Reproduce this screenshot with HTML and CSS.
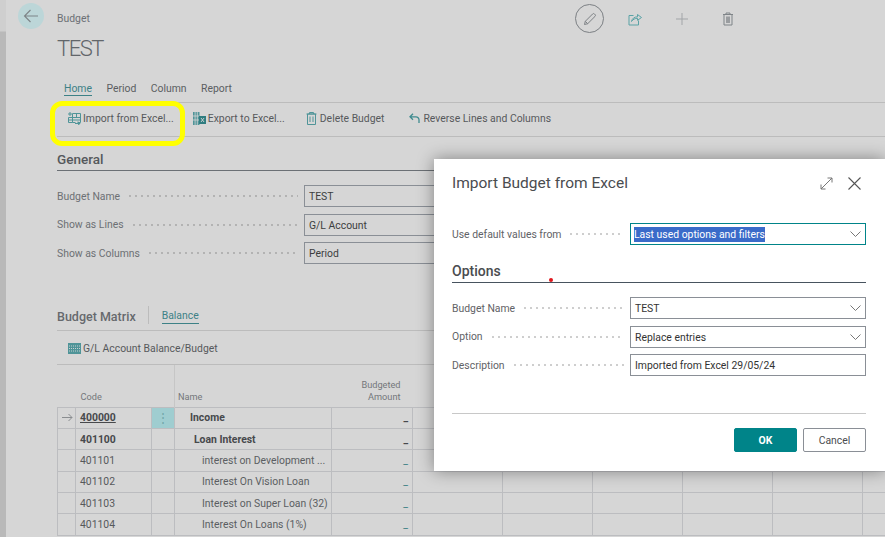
FILE: index.html
```html
<!DOCTYPE html>
<html lang="en">
<head>
  <meta charset="UTF-8" />
  <title>Budget - TEST</title>
  <link rel="stylesheet" href="styles.css">
</head>
<body>
  <div class="strip"></div>
  <div class="page">
    <header class="top">
      <button class="back">
        <svg width="16" height="14" viewBox="0 0 16 14"><path d="M15 7H1.500M7.500 1L1.500 7l6 6" fill="none" stroke="#7d8487" stroke-width="1.100"/></svg>
      </button>
      <div class="crumb">Budget</div>
      <div class="top-icons">
        <span class="edit">
          <svg width="14" height="14" viewBox="0 0 14 14"><path d="M1.500 12.500l.8-3.200L9.600 2a1.300 1.300 0 0 1 1.900 0l.5.500a1.300 1.300 0 0 1 0 1.900L4.700 11.700zM2.300 9.300l2.400 2.400" fill="none" stroke="#7c8084" stroke-width="1"/></svg>
        </span>
        <svg class="ico-share" width="14" height="14" viewBox="0 0 14 14"><path d="M5.500 3.500H1v9.500h9.500V8.500M3.500 9.500C4 6.500 6.500 4.800 9.500 4.800V2.500L13.500 5.500L9.500 8.300V6.300C7 6.300 5 7.300 3.500 9.500Z" fill="none" stroke="#5aa3a6" stroke-width="1"/></svg>
        <svg class="ico-plus" width="14" height="14" viewBox="0 0 14 14"><path d="M7 1v12M1 7h12" stroke="#a2a5a8" stroke-width="1"/></svg>
        <svg class="ico-trash" width="12" height="14" viewBox="0 0 12 14"><path d="M1 2.500h10M4 2.500V1h4v1.500M2 2.500h8V13H2z" fill="none" stroke="#7f8488" stroke-width="1"/><path d="M4 4.500h4V11H4z" fill="#9a9da0"/></svg>
      </div>
    </header>
    <h1 class="title">TEST</h1>

    <nav class="tabs">
      <a class="tab active">Home</a>
      <a class="tab">Period</a>
      <a class="tab">Column</a>
      <a class="tab">Report</a>
    </nav>

    <div class="toolbar">
      <span class="action action-import">
        <svg width="13" height="13" viewBox="0 0 13 13"><path d="M4.500 1.500h8v9h-3M.5 5.500h12M4.500 1.500v9h3M8.500 1.500v4M.5 5.500v5h4M.5 8h12" fill="none" stroke="#4f9498" stroke-width="1"/><path d="M0 2h4M2 0v4M7 11.500h5M10 9.500l2 2-2 1.500" fill="none" stroke="#4f9498" stroke-width="1"/></svg>
        Import from Excel...
      </span>
      <span class="action action-export">
        <svg width="13" height="13" viewBox="0 0 13 13"><path d="M0 0h6.500v13H0z" fill="#4f9498"/><path d="M2.100 0v13M4.300 0v13M0 4h6M0 8h6" stroke="#d6d6d6" stroke-width=".8"/><path d="M6 4h7v8H6z" fill="#2f7d80"/><path d="M8 6l3 4M11 6l-3 4" stroke="#d6d6d6" stroke-width=".9"/></svg>
        Export to Excel...
      </span>
      <span class="action action-delete">
        <svg width="11" height="13" viewBox="0 0 11 13"><path d="M.5 2h10M3.500 2V.5h4V2M1.500 2h8v10.500h-8zM4 4.500V10M7 4.500V10" fill="none" stroke="#4f9498" stroke-width="1"/></svg>
        Delete Budget
      </span>
      <span class="action action-reverse">
        <svg width="11" height="11" viewBox="0 0 11 11"><path d="M4 .8L1 3.800l3 3M1 3.800h6a3 3 0 0 1 3 3V10" fill="none" stroke="#3f8b8f" stroke-width="1.300"/></svg>
        Reverse Lines and Columns
      </span>
    </div>

    <h2 class="section-title">General</h2>
    <div class="form">
      <div class="row"><span class="lbl">Budget Name</span><span class="dots"></span><div class="box">TEST</div></div>
      <div class="row"><span class="lbl">Show as Lines</span><span class="dots"></span><div class="box">G/L Account</div></div>
      <div class="row"><span class="lbl">Show as Columns</span><span class="dots"></span><div class="box">Period</div></div>
    </div>

    <div class="matrix-head">
      <span class="matrix-title">Budget Matrix</span>
      <a class="matrix-tab">Balance</a>
    </div>
    <div class="matrix-bar">
      <svg width="13" height="11" viewBox="0 0 13 11"><path d="M0 0h13v11H0z" fill="#4f9498"/><path d="M1 3h11M1 5.500h11M1 8h11" stroke="#d6d6d6" stroke-width=".9" stroke-dasharray="1 1"/></svg>
      G/L Account Balance/Budget
    </div>

    <table class="grid">
      <colgroup>
        <col class="c-arrow"><col class="c-code"><col class="c-menu"><col class="c-name"><col class="c-amount">
        <col class="c-per"><col class="c-per"><col class="c-per"><col class="c-per"><col class="c-per"><col class="c-last">
      </colgroup>
      <thead>
        <tr>
          <th></th>
          <th class="th-code">Code</th>
          <th></th>
          <th class="th-name">Name</th>
          <th class="th-amount">Budgeted<br>Amount</th>
          <th colspan="6"></th>
        </tr>
      </thead>
      <tbody>
        <tr class="strong">
          <td class="arrow"><svg width="11" height="9" viewBox="0 0 11 9"><path d="M0 4.500h10M6.500 1L10 4.500 6.500 8" fill="none" stroke="#8a8d90" stroke-width="1"/></svg></td>
          <td class="code"><u>400000</u></td>
          <td class="menu">&#8942;</td>
          <td class="name lvl0">Income</td>
          <td class="amt">_</td><td></td><td></td><td></td><td></td><td></td><td></td>
        </tr>
        <tr class="strong">
          <td></td><td class="code">401100</td><td></td>
          <td class="name lvl1">Loan Interest</td>
          <td class="amt">_</td><td></td><td></td><td></td><td></td><td></td><td></td>
        </tr>
        <tr>
          <td></td><td class="code">401101</td><td></td>
          <td class="name lvl2">interest on Development ...</td>
          <td class="amt link">_</td><td></td><td></td><td></td><td></td><td></td><td></td>
        </tr>
        <tr>
          <td></td><td class="code">401102</td><td></td>
          <td class="name lvl2">Interest On Vision Loan</td>
          <td class="amt link">_</td><td></td><td></td><td></td><td></td><td></td><td></td>
        </tr>
        <tr>
          <td></td><td class="code">401103</td><td></td>
          <td class="name lvl2">Interest on Super Loan (32)</td>
          <td class="amt link">_</td><td></td><td></td><td></td><td></td><td></td><td></td>
        </tr>
        <tr>
          <td></td><td class="code">401104</td><td></td>
          <td class="name lvl2">Interest On Loans (1%)</td>
          <td class="amt link">_</td><td></td><td></td><td></td><td></td><td></td><td></td>
        </tr>
      </tbody>
    </table>
  </div>

  <div class="highlight"></div>

  <div class="dialog">
    <div class="dlg-head">
      <span class="dlg-title">Import Budget from Excel</span>
      <svg class="dlg-expand" width="13" height="13" viewBox="0 0 13 13"><path d="M1 12L12 1M7.500 1H12v4.500M1 7.500V12h4.500" fill="none" stroke="#777" stroke-width="1"/></svg>
      <svg class="dlg-close" width="13" height="13" viewBox="0 0 13 13"><path d="M.5.500l12 12M12.500.500l-12 12" stroke="#555" stroke-width="1.100"/></svg>
    </div>
    <div class="dlg-row first">
      <span class="lbl">Use default values from</span><span class="dots"></span>
      <div class="box focus"><span class="sel">Last used options and filters</span>
        <svg class="chev" width="11" height="6" viewBox="0 0 11 6"><path d="M.5.500l5 5 5-5" fill="none" stroke="#777" stroke-width="1"/></svg></div>
    </div>
    <h2 class="dlg-section">Options</h2>
    <div class="dlg-row">
      <span class="lbl">Budget Name</span><span class="dots"></span>
      <div class="box">TEST
        <svg class="chev" width="11" height="6" viewBox="0 0 11 6"><path d="M.5.500l5 5 5-5" fill="none" stroke="#777" stroke-width="1"/></svg></div>
    </div>
    <div class="dlg-row">
      <span class="lbl">Option</span><span class="dots"></span>
      <div class="box">Replace entries
        <svg class="chev" width="11" height="6" viewBox="0 0 11 6"><path d="M.5.500l5 5 5-5" fill="none" stroke="#777" stroke-width="1"/></svg></div>
    </div>
    <div class="dlg-row">
      <span class="lbl">Description</span><span class="dots"></span>
      <div class="box">Imported from Excel 29/05/24</div>
    </div>
    <div class="dlg-foot">
      <button class="btn ok">OK</button>
      <button class="btn cancel">Cancel</button>
    </div>
    <span class="red-dot"></span>
  </div>
</body>
</html>
```

FILE: styles.css
```css
* {
  box-sizing: border-box;
}
html, body {
  margin: 0;
  height: 100%;
}
body {
  width: 885px;
  height: 537px;
  overflow: hidden;
  position: relative;
  display: flex;
  background: #d6d6d6;
  font-family: Roboto, "Noto Sans", sans-serif;
  font-size: 10.400px;
  color: #56595c;
}
.strip {
  width: 6px;
  flex: none;
  background: linear-gradient(#cfcfcf 0, #cfcfcf 31px, #b9b9b9 32px);
}
.page {
  flex: 1;
  min-width: 0;
  padding-left: 51px;
}

/* header */
.top {
  height: 36px;
  display: flex;
  align-items: center;
  position: relative;
}
.back {
  position: absolute;
  left: -39px;
  top: 3px;
  width: 26px;
  height: 26px;
  padding: 0;
  border: none;
  border-radius: 50%;
  background: #bcd6d8;
  display: flex;
  align-items: center;
  justify-content: center;
}
.crumb {
  color: #6c7075;
}
.top-icons {
  position: absolute;
  left: 518px;
  top: 4px;
  display: flex;
  align-items: center;
}
.edit {
  width: 29px;
  height: 29px;
  border: 1px solid #7c8084;
  border-radius: 50%;
  display: flex;
  align-items: center;
  justify-content: center;
}
.ico-share { margin-left: 24px; }
.ico-plus { margin-left: 33px; }
.ico-trash { margin-left: 33px; }
.title {
  margin: 0;
  height: 40px;
  font-size: 22px;
  font-weight: 300;
  line-height: 26px;
  letter-spacing: -1.500px;
  color: #62666a;
}

/* tabs and toolbar */
.tabs {
  height: 26px;
  padding: 4px 0 0 7px;
  display: flex;
  gap: 14.500px;
  align-items: flex-start;
}
.tab {
  line-height: 18px;
  color: #5b5e62;
}
.tab.active {
  color: #3d8186;
  border-bottom: 1px solid #3d8186;
  height: 16px;
}
.toolbar {
  height: 35px;
  border-top: 1px solid #bcbcbc;
  border-bottom: 1px solid #bcbcbc;
  display: flex;
  align-items: center;
  padding: 0 0 2px 11px;
}
.action {
  display: flex;
  align-items: center;
  gap: 2px;
  white-space: nowrap;
}
.action-export { margin-left: 19px; }
.action-delete { margin-left: 21px; gap: 3px; }
.action-reverse { margin-left: 25px; gap: 3px; }

/* general section */
.section-title {
  margin: 14px 0 0;
  height: 20px;
  border-bottom: 1px solid #6b7075;
  font-size: 13.500px;
  font-weight: 500;
  line-height: 17px;
  color: #55585c;
}
.form {
  margin-top: 14px;
  display: flex;
  flex-direction: column;
  gap: 6.500px;
}
.row {
  display: flex;
  align-items: center;
  height: 22px;
  width: 527px;
}
.lbl {
  color: #6d7074;
  white-space: nowrap;
}
.dots {
  flex: 1;
  height: 2px;
  margin: 0 6px 0 7px;
  background: radial-gradient(circle, #b2b2b2 0.7px, transparent 1px) 0 0 / 6px 2px repeat-x;
}
.dialog .dots {
  background: radial-gradient(circle, #cdcdcd 0.7px, transparent 1px) 0 0 / 6px 2px repeat-x;
}
.row .box {
  width: 280px;
  flex: none;
}
.box {
  height: 22px;
  border: 1px solid #8a8f96;
  padding: 0 4px;
  line-height: 21px;
  color: #3c3e40;
  position: relative;
}

/* matrix */
.matrix-head {
  margin-top: 42px;
  height: 25px;
  display: flex;
  align-items: flex-start;
  border-bottom: 1px solid #bcbcbc;
}
.matrix-title {
  font-size: 12.500px;
  font-weight: 500;
  line-height: 21px;
  height: 18px;
  padding-right: 12px;
  border-right: 1px solid #bcbcbc;
  color: #66696d;
}
.matrix-tab {
  margin-left: 13px;
  height: 18px;
  line-height: 20px;
  color: #3d8186;
  border-bottom: 1px solid #3d8186;
}
.matrix-bar {
  height: 34px;
  padding: 1px 0 0 11px;
  display: flex;
  align-items: center;
  gap: 2px;
  border-bottom: 1px solid #bcbcbc;
}
.grid {
  table-layout: fixed;
  border-collapse: collapse;
  width: 828px;
}
.c-arrow { width: 18px; }
.c-code { width: 76px; }
.c-menu { width: 23px; }
.c-name { width: 157px; }
.c-amount { width: 81px; }
.c-per { width: 90px; }
.c-last { width: 23px; }
.grid th {
  height: 42px;
  padding: 0 12px 4px 4px;
  font-size: 9.200px;
  font-weight: 400;
  line-height: 12px;
  color: #74777b;
  vertical-align: bottom;
  text-align: left;
}
.th-code { padding-left: 5px !important; }
.th-name {
  border-left: 1px solid #c6c6c6;
  padding-left: 3px !important;
}
.th-amount {
  text-align: right !important;
}
.grid td {
  height: 21.400px;
  padding: 0 4px;
  border: 1px solid #bcbdc0;
  white-space: nowrap;
  overflow: hidden;
}
.strong td {
  font-weight: 700;
  color: #47494c;
}
.arrow {
  padding: 0 0 0 4px !important;
}
.arrow svg {
  display: block;
}
.strong .menu {
  background: #9fcdd0;
  color: #6fa6a9;
  font-weight: 400;
  text-align: center;
  font-size: 12px;
  padding: 0;
}
.name { color: #5b5e62; }
.strong .name { color: #47494c; }
.lvl0 { padding-left: 15px !important; }
.lvl1 { padding-left: 19px !important; }
.lvl2 { padding-left: 27px !important; }
.amt {
  text-align: right;
  color: #47494c;
}
.amt.link { color: #3d8186; }

/* yellow marker drawn over the screenshot */
.highlight {
  position: absolute;
  left: 50px;
  top: 101px;
  width: 135px;
  height: 45px;
  border: 5px solid #ffff00;
  border-radius: 12px;
}

/* dialog */
.dialog {
  position: absolute;
  left: 434px;
  top: 159px;
  width: 451px;
  height: 312px;
  background: #fff;
  padding: 0 19px 0 18px;
  box-shadow: 0 0 16px rgba(0, 0, 0, 0.4);
}
.dlg-head {
  height: 48px;
  display: flex;
  align-items: center;
}
.dlg-title {
  flex: 1;
  font-size: 15.500px;
  color: #4a4c4f;
}
.dlg-close {
  margin: 0 5px 0 15px;
}
.dlg-row {
  display: flex;
  align-items: center;
  height: 22px;
  margin-bottom: 6.500px;
}
.dlg-row.first {
  margin: 16px 0 0;
}
.dlg-row .lbl {
  color: #5f6266;
}
.dlg-row .box {
  width: 236px;
  flex: none;
  color: #333;
}
.box.focus {
  border: 1px solid #008489;
  padding-left: 3px;
}
.sel {
  display: inline-block;
  line-height: 15px;
  background: #3a6bc9;
  color: #fff;
}
.chev {
  position: absolute;
  right: 4px;
  top: 7px;
}
.dlg-section {
  margin: 16px 0 14px;
  height: 22px;
  border-bottom: 1px solid #47535e;
  font-size: 14px;
  font-weight: 500;
  line-height: 20px;
  color: #4a4c4f;
}
.dlg-foot {
  margin-top: 37px;
  border-top: 1px solid #c8c8c8;
  padding-top: 14px;
  display: flex;
  justify-content: flex-end;
  gap: 6px;
}
.btn {
  width: 63px;
  height: 24px;
  padding: 0;
  font: inherit;
  border-radius: 2px;
}
.ok {
  background: #008489;
  border: 1px solid #008489;
  color: #fff;
  font-weight: 700;
}
.cancel {
  background: #fff;
  border: 1px solid #8a8f96;
  color: #4a4c4f;
}
.red-dot {
  position: absolute;
  left: 115px;
  top: 119px;
  width: 4px;
  height: 4px;
  border-radius: 50%;
  background: #e0161c;
}
```
